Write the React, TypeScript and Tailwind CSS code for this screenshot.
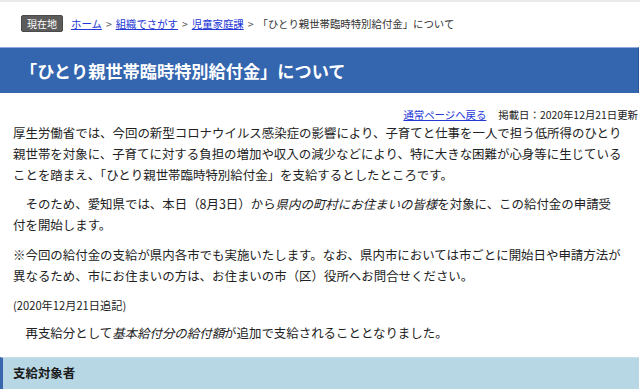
const linkClass = "text-[#2438d6] underline underline-offset-[1px]";
const indent = "\u3000";

function Breadcrumb() {
  return (
    <nav className="flex h-[45px] items-center px-[21px] pb-[2px] text-[10.4px] text-[#333]">
      <span className="mr-[8px] flex h-[17px] w-[42px] items-center justify-center rounded-[2px] border border-[#4a4a4a] bg-[#5c5c5c] text-[10px] text-white">
        現在地
      </span>
      <a href="#" className={linkClass}>ホーム</a>
      <span className="mx-[4px] text-[#555]">&gt;</span>
      <a href="#" className={linkClass}>組織でさがす</a>
      <span className="mx-[4px] text-[#555]">&gt;</span>
      <a href="#" className={linkClass}>児童家庭課</a>
      <span className="mx-[4px] text-[#555]">&gt;</span>
      <span>「ひとり親世帯臨時特別給付金」について</span>
    </nav>
  );
}

export default function App() {
  return (
    <div
      className="min-h-[389px] w-full overflow-hidden border-t-2 border-[#ebebeb] bg-white text-[#222]"
      style={{ fontFamily: '"Noto Sans CJK JP", "Noto Sans", sans-serif' }}
    >
      <Breadcrumb />

      <h1 className="flex h-[46px] w-[639px] items-center border-t border-r border-t-[#8eaade] border-r-[#2a559c] bg-[#3465af] px-[20px] text-[17.2px] font-bold text-white">
        「ひとり親世帯臨時特別給付金」について
      </h1>

      <div className="mt-[15px] flex justify-end gap-[12px] pr-[2px] text-[10.4px] leading-[14px]">
        <a href="#" className={linkClass}>通常ページへ戻る</a>
        <span>掲載日：2020年12月21日更新</span>
      </div>

      <div className="w-[626px] pl-[13px] text-[12.45px] leading-[21px]">
        <p className="mt-[1px]">
          厚生労働省では、今回の新型コロナウイルス感染症の影響により、子育てと仕事を一人で担う低所得のひとり親世帯を対象に、子育てに対する負担の増加や収入の減少などにより、特に大きな困難が心身等に生じていることを踏まえ、「ひとり親世帯臨時特別給付金」を支給するとしたところです。
        </p>
        <p className="mt-[8px]">
          {indent}そのため、愛知県では、本日（8月3日）から<span className="italic">県内の町村にお住まいの皆様</span>を対象に、この給付金の申請受
          <br />
          付を開始します。
        </p>
        <p className="mt-[9px]">
          ※今回の給付金の支給が県内各市でも実施いたします。なお、県内市においては市ごとに開始日や申請方法が異なるため、市にお住まいの方は、お住まいの市（区）役所へお問合せください。
        </p>
        <p className="mt-[10px] text-[11.2px] leading-[16px]">(2020年12月21日追記)</p>
        <p className="mt-[10px]">
          {indent}再支給分として<span className="italic">基本給付分の給付額</span>が追加で支給されることとなりました。
        </p>
      </div>

      <h2 className="mt-[13px] flex h-[32px] w-[639px] items-center border-t border-l-[3px] border-t-[#c6e0ea] border-l-[#3a66b0] bg-[#b7d7e4] pl-[10px] text-[12.45px] font-bold text-[#1a1a1a]">
        支給対象者
      </h2>
    </div>
  );
}
